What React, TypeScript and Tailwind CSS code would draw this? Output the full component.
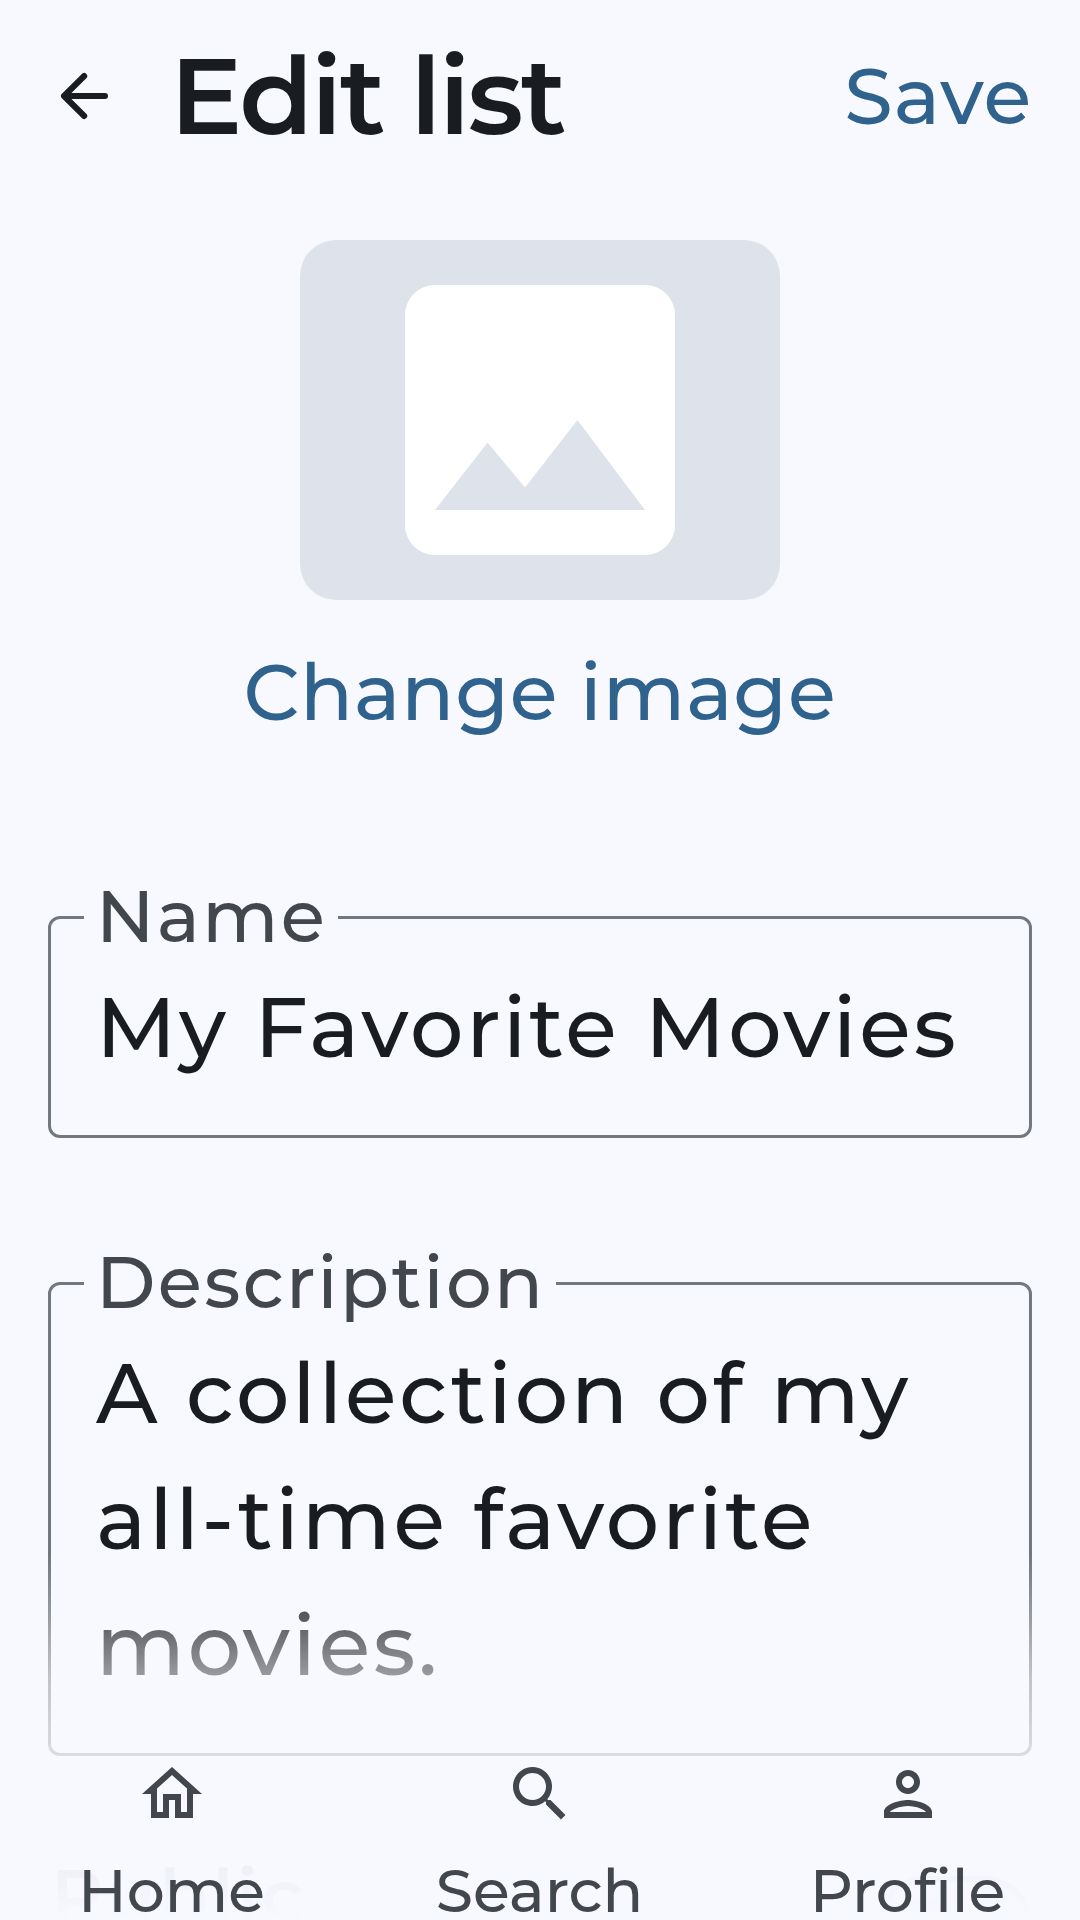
import type { ReactNode } from "react";

function Field({ label, children }: { label: string; children: ReactNode }) {
  return (
    <div className="relative rounded-[12px] border-[3px] border-[#72787e] px-[45px] py-[45px]">
      <span className="absolute -top-[39px] left-[33px] bg-[#f8f9ff] pr-[11px] pl-3 text-[72px] leading-[72px] tracking-[2.35px] text-[#42474e]">
        {label}
      </span>
      <p className="text-[84px] leading-[126px] tracking-[2.9px]">{children}</p>
    </div>
  );
}

function NavItem({ label, path }: { label: string; path: string }) {
  return (
    <a className="flex flex-col items-center gap-6 text-[#42474e]">
      <svg className="size-[72px]" viewBox="0 0 24 24" fill="currentColor">
        <path d={path} />
      </svg>
      <span className="pr-px text-[60px] leading-[73px]">{label}</span>
    </a>
  );
}

const navItems = [
  {
    label: "Home",
    path: "M12 5.69l5 4.5V18h-2v-6H9v6H7v-7.81l5-4.5M12 3L2 12h3v8h6v-6h2v6h6v-8h3L12 3z",
  },
  {
    label: "Search",
    path: "M15.5 14h-.79l-.28-.27C15.41 12.59 16 11.11 16 9.5 16 5.91 13.09 3 9.5 3S3 5.91 3 9.5 5.91 16 9.5 16c1.61 0 3.09-.59 4.23-1.57l.27.28v.79l5 4.99L20.49 19l-4.99-5zm-6 0C7.01 14 5 11.99 5 9.5S7.01 5 9.5 5 14 7.01 14 9.5 11.99 14 9.5 14z",
  },
  {
    label: "Profile",
    path: "M12 6c1.1 0 2 .9 2 2s-.9 2-2 2-2-.9-2-2 .9-2 2-2m0 10c2.7 0 5.8 1.29 6 2H6c.23-.72 3.31-2 6-2m0-12C9.79 4 8 5.79 8 8s1.79 4 4 4 4-1.79 4-4-1.79-4-4-4zm0 10c-2.67 0-8 1.34-8 4v2h16v-2c0-2.66-5.33-4-8-4z",
  },
];

export default function App() {
  return (
    <div className="relative h-[1920px] w-[1080px] overflow-hidden bg-[#f8f9ff] px-12 font-['Montserrat','Inter',sans-serif] font-medium text-[#191c20]">
      <header className="flex h-48 items-center">
        <svg
          className="size-[72px] shrink-0"
          viewBox="0 0 72 72"
          fill="none"
          stroke="currentColor"
          strokeWidth="6"
          strokeLinecap="round"
          strokeLinejoin="round"
        >
          <path d="M57 36H16M36.2 16L16 36l20.2 20" />
        </svg>
        <h1 className="mb-[2px] ml-[50px] text-[108px] leading-[132px] font-semibold tracking-[-2.5px] whitespace-nowrap">
          Edit list
        </h1>
        <button className="ml-auto text-[78px] leading-[96px] font-medium tracking-[0.8px] text-[#2f628c]">
          Save
        </button>
      </header>

      <main>
        <div className="mt-12 flex flex-col items-center">
          <div className="flex h-[360px] w-[480px] items-center justify-center rounded-[36px] bg-[#dee3eb]">
            <svg className="size-[270px]" viewBox="3 3 18 18">
              <rect x="3" y="3" width="18" height="18" rx="2" fill="#ffffff" />
              <path d="M5 18l3.5-4.5 2.5 3 3.5-4.5L19 18z" fill="#dee3eb" />
            </svg>
          </div>
          <button className="mt-8 h-[120px] text-[78px] leading-[120px] font-medium tracking-[0.8px] text-[#2f628c]">
            Change image
          </button>
        </div>

        <div className="mt-[164px] flex flex-col gap-36">
          <Field label="Name">My Favorite Movies</Field>
          <Field label="Description">A collection of my all-time favorite movies.</Field>
        </div>

        <div className="mt-[85px] flex items-start justify-between pl-[3px]">
          <span className="text-[72px] leading-[108px] font-semibold tracking-[3.6px]">Public</span>
          <div className="mt-[35px] flex h-24 w-[156px] items-center rounded-full border-[6px] border-[#72787e] bg-[#e1e2e8] pl-[18px]">
            <div className="size-12 rounded-full bg-[#72787e]" />
          </div>
        </div>
      </main>

      <nav className="absolute inset-x-0 bottom-0 h-[365px] bg-[linear-gradient(to_bottom,rgba(248,249,255,0)_0px,rgba(248,249,255,0.27)_60px,rgba(248,249,255,0.57)_120px,rgba(248,249,255,0.77)_199px,rgba(248,249,255,0.965)_317px,rgba(248,249,255,1)_365px)] pt-[203px]">
        <div className="-mx-3 grid grid-cols-3">
          {navItems.map((item) => (
            <NavItem key={item.label} label={item.label} path={item.path} />
          ))}
        </div>
      </nav>
    </div>
  );
}
